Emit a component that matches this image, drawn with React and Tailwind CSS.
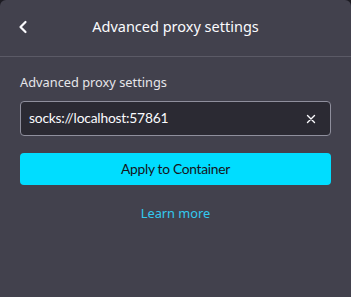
import { useState } from 'react';

const App = () => {
    const [proxy, setProxy] = useState('socks://localhost:57861');

    return (
        <div className="h-[297px] w-[351px] bg-[#1c1b22]">
            <div className="flex h-full flex-col rounded-t-[6px] bg-[#42414d] text-[#fbfbfe] font-['Noto_Sans',sans-serif]">
                {/* Header */}
                <div className="relative flex h-[57px] items-center justify-center border-b border-[#5b5a66]">
                    <button className="absolute left-[15px] top-[19px] flex h-[16px] w-[16px] items-center justify-center">
                        <svg width="12" height="14" viewBox="0 0 12 14" fill="none">
                            <path d="M8.5 2 L3.5 7 L8.5 12" stroke="#fbfbfe" strokeWidth="2.2" strokeLinecap="round" strokeLinejoin="round" />
                        </svg>
                    </button>
                    <h1 className="text-[14.5px] leading-none mb-[3px]">Advanced proxy settings</h1>
                </div>

                {/* Body */}
                <div className="flex flex-col px-[20px] pt-[15px]">
                    <label className="text-[12.8px] leading-[20px] text-[#e6e6ea]">Advanced proxy settings</label>
                    <div className="mt-[9px] flex h-[35px] items-center rounded-[4px] border border-[#8f8f9d] bg-[#2b2a33] pl-[8px] pr-[11px]">
                        <input
                            value={proxy}
                            onChange={(e) => setProxy(e.target.value)}
                            className="flex-1 bg-transparent text-[13.8px] tracking-[-0.2px] text-[#fbfbfe] outline-none font-['Lato',sans-serif]"
                        />
                        <button onClick={() => setProxy('')} className="flex h-[16px] w-[16px] items-center justify-center">
                            <svg width="10" height="10" viewBox="0 0 10 10">
                                <path d="M1.5 1.5 L8.5 8.5 M8.5 1.5 L1.5 8.5" stroke="#fbfbfe" strokeWidth="1.4" strokeLinecap="round" />
                            </svg>
                        </button>
                    </div>
                    <button className="mt-[17px] h-[32px] w-full rounded-[4px] bg-[#00ddff] text-[13.8px] tracking-[-0.3px] text-[#15141a] font-['Lato',sans-serif]">
                        Apply to Container
                    </button>
                    <a href="#" className="mt-[18px] self-center text-[12.8px] leading-[20px] text-[#33c9ef]">Learn more</a>
                </div>
            </div>
        </div>
    );
};

export default App;
